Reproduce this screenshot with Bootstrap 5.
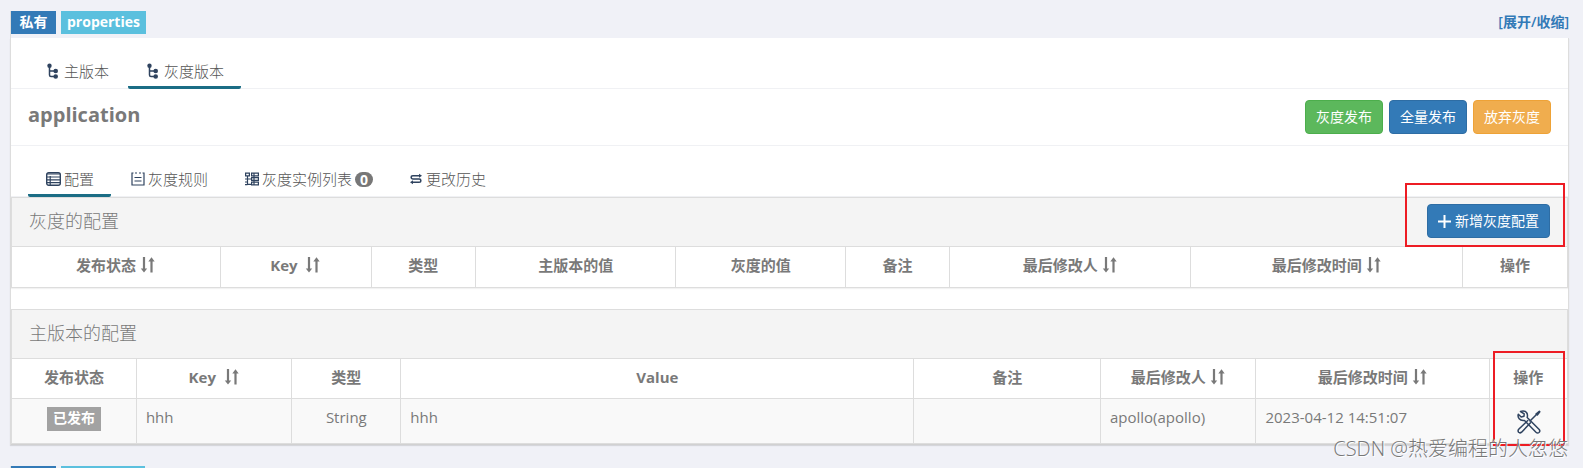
<!DOCTYPE html>
<html lang="zh-CN">
<head>
<meta charset="utf-8">
<meta name="viewport" content="width=device-width, initial-scale=1">
<title>application</title>
<link rel="stylesheet" href="https://cdn.jsdelivr.net/npm/bootstrap@5.3.0/dist/css/bootstrap.min.css">
<style>
  body { background: #f0f1f7; color: #797979; font: 15px/20px "Open Sans", "Noto Sans CJK SC", sans-serif; }
  .page-view { padding: 11px 14px 0 10px; }
  .ns-head { border-left: 1px solid #ddd; height: 27px; }
  .tags { gap: 5px; }
  .tag { display: inline-block; height: 23px; padding: 0 6px; color: #fff; font-size: 14px; line-height: 22px; font-weight: 700; white-space: nowrap; text-align: center; }
  .tag-blue { background: #337ab7; min-width: 45px; }
  .tag-cyan { background: #5bc0de; min-width: 84px; }
  .tag-gray { background: #a2a2a2; height: 24px; }
  .toggle-link { color: #337ab7; font-size: 14px; line-height: 22px; font-weight: 600; text-decoration: none; }
  .ns-panel { background: #fff; border: 1px solid #ddd; border-top: 0; box-shadow: 0 1px 1px rgba(0,0,0,.1); margin-bottom: 21px; }
  .tab-bar { height: 51px; border-bottom: 1px solid #f0f1f4; padding: 0 17px; gap: 2px; }
  .tab-bar .nav-link { height: 51px; border-bottom: 3px solid transparent; border-radius: 2px; padding: 0 17px; color: #555; font-weight: 300; display: flex; align-items: center; }
  .tab-bar .nav-link.active { border-bottom-color: #1b6d85; }
  .tab-bar .nav-link svg { flex: none; }
  .tab-main .nav-link { padding: 18px 17px 0 19px; }
  .tab-main .nav-link svg { margin-right: 5px; }
  .tab-sub .nav-link { padding: 18px 17px 0 18px; }
  .tab-sub .nav-link svg { margin-right: 3px; }
  .title-row { height: 57px; padding: 0 17px; border-bottom: 1px solid #f0f1f4; }
  .title-row h1 { font-size: 20px; line-height: 28px; font-weight: 700; margin: 0 0 5px; }
  .acts { gap: 6px; }
  .act { height: 34px; padding: 0 10px; font-size: 14px; line-height: 20px; border-radius: 4px; color: #fff; white-space: nowrap; }
  .act:hover { color: #fff; filter: brightness(.93); }
  .act-green { background: #5cb85c; border-color: #4cae4c; }
  .act-blue { background: #337ab7; border-color: #2e6da4; }
  .act-orange { background: #f0ad4e; border-color: #eea236; }
  .count { background: #777; color: #fff; font-size: 14px; line-height: 15px; font-weight: 700; border-radius: 10px; padding: 0 5px; margin-left: 3px; }
  .cfg { border: 1px solid #ddd; box-shadow: 0 1px 1px rgba(0,0,0,.05); }
  .cfg + .cfg { margin-top: 21px; }
  .cfg-head { background: #f4f4f4; height: 48px; padding: 0 17px 2px; }
  .cfg-head h2 { font-size: 18px; line-height: 24px; font-weight: 300; margin: 0; }
  .grid-table { width: 100%; table-layout: fixed; margin: 0; border-collapse: collapse; }
  .grid-table th, .grid-table td { border: 1px solid #ddd; border-bottom: 0; padding: 0 9px; white-space: nowrap; }
  .grid-table th:first-child, .grid-table td:first-child { border-left: 0; }
  .grid-table th:last-child, .grid-table td:last-child { border-right: 0; }
  .grid-table th { height: 40px; padding-bottom: 3px; text-align: center; font-weight: 700; }
  .grid-table td { height: 45px; padding-bottom: 7px; background: #f9f9f9; }
  .grid-table td.cell-tag { padding-bottom: 4px; }
  .grid-table td.cell-op { padding: 2px 0 0 1px; }
  .grid-table svg { vertical-align: -2px; }
  .w5 { width: 5%; } .w67 { width: 6.7%; } .w7 { width: 7%; } .w8 { width: 8%; } .w97 { width: 9.7%; }
  .w10 { width: 10%; } .w109 { width: 10.9%; } .w12 { width: 12%; } .w129 { width: 12.9%; } .w134 { width: 13.4%; }
  .w15 { width: 15%; } .w155 { width: 15.5%; } .w175 { width: 17.5%; } .w33 { width: 33%; }
  .tool-btn { border: 0; background: none; padding: 0; line-height: 0; }
  .hl { position: absolute; border: 2px solid #ed1c24; pointer-events: none; }
  .hl-add { top: -15px; right: 2px; width: 160px; height: 64px; }
  .hl-op { top: 41px; bottom: -3px; right: 2px; width: 72px; }
  .wm { position: absolute; right: -1px; bottom: -20px; font-size: 20px; line-height: 28px; font-weight: 300; color: #777; white-space: nowrap; text-shadow: 1px 1px 0 #fff; pointer-events: none; }
</style>
</head>
<body>
<svg width="0" height="0" class="position-absolute" aria-hidden="true">
  <symbol id="i-branch" viewBox="0 0 12 16"><g fill="#2f435f"><circle cx="2.500" cy="2.800" r="2.200"/><circle cx="8.700" cy="8" r="2.300"/><circle cx="8.700" cy="13.500" r="2.300"/></g><path d="M2.500 3v9q0 1.500 1.500 1.500H8M2.500 8H8" fill="none" stroke="#2f435f" stroke-width="1.500"/></symbol>
  <symbol id="i-table" viewBox="0 0 15 14"><rect x=".7" y=".7" width="13.600" height="12.600" rx="2" fill="none" stroke="#2f435f" stroke-width="1.400"/><path d="M1 2h13M1 5h13M1 7.800h13M1 10.600h13M4.200 4v9" stroke="#2f435f" stroke-width="1.200"/></symbol>
  <symbol id="i-rule" viewBox="0 0 14 14"><path d="M2.500 1H1v12h12V1h-1.500M4 1h2M8 1h2M3.500 5.500h7M3.500 9h7" fill="none" stroke="#2f435f" stroke-width="1.200"/></symbol>
  <symbol id="i-inst" viewBox="0 0 14 14"><path d="M.6 1.200h3.800v2.600H.6zM2.500 4v8.300h4M0 7h6.500M0 10h2.500M0 12.700h2.500M6.600 1.200h6.800v2.600H6.600zM6.600 5.700h6.800v2.600H6.600zM6.600 10.200h6.800v2.600H6.600zM9 1v12" fill="none" stroke="#2f435f" stroke-width="1.200"/></symbol>
  <symbol id="i-hist" viewBox="0 0 12 12"><path d="M10 2.700H2.800a1.600 1.600 0 0 0 0 3.300h6.400a1.600 1.600 0 0 1 0 3.300H2" fill="none" stroke="#2f435f" stroke-width="1.600"/><path d="M9 .7L12 2.700 9 4.700zM3 7.300L0 9.300l3 2z" fill="#2f435f"/></symbol>
  <symbol id="i-sort" viewBox="0 0 16 16"><path d="M4 0v13M11.500 3v12.500" stroke="#797979" stroke-width="2.200"/><path d="M.8 11.500h6.400L4 15.500zM8.300 4.500h6.400L11.500 .3z" fill="#797979"/></symbol>
  <symbol id="i-tools" viewBox="0 0 24 24"><g fill="none" stroke="#2f435f" stroke-width="1.500" stroke-linejoin="round" stroke-linecap="round"><path d="M3.500 1.500Q7 0 9.500 2.500Q11 4.500 10.200 7.500L22.200 19.500Q23.500 21.300 22 22.500Q20.500 23.500 19 22.200L7.500 10.400Q4 11 2.200 8.800Q.5 6.800 1.300 4.200L4.200 7 7 6.300 7.200 3.800z"/><path d="M13.500 12.800L4.600 22.200Q3 23.500 1.600 22.300Q.5 20.800 1.700 19.300L10.800 10.500M13 11L19.500 4.500M19 4L22.300 1.300 22.800 1.800 20.300 5z"/></g></symbol>
</svg>

<main class="page-view vh-100 overflow-hidden">
  <header class="ns-head d-flex justify-content-between">
    <div class="tags d-flex"><span class="tag tag-blue">私有</span><span class="tag tag-cyan">properties</span></div>
    <a href="#" class="toggle-link">[展开/收缩]</a>
  </header>
  <section class="ns-panel">
    <nav class="nav tab-bar tab-main flex-nowrap">
      <a class="nav-link" href="#"><svg width="12" height="16"><use href="#i-branch"/></svg>主版本</a>
      <a class="nav-link active" href="#"><svg width="12" height="16"><use href="#i-branch"/></svg>灰度版本</a>
    </nav>
    <div class="title-row d-flex align-items-center justify-content-between">
      <h1>application</h1>
      <div class="acts d-flex">
        <button type="button" class="btn act act-green">灰度发布</button>
        <button type="button" class="btn act act-blue">全量发布</button>
        <button type="button" class="btn act act-orange">放弃灰度</button>
      </div>
    </div>
    <nav class="nav tab-bar tab-sub flex-nowrap">
      <a class="nav-link active" href="#"><svg width="15" height="14"><use href="#i-table"/></svg>配置</a>
      <a class="nav-link" href="#"><svg width="14" height="14"><use href="#i-rule"/></svg>灰度规则</a>
      <a class="nav-link" href="#"><svg width="14" height="14"><use href="#i-inst"/></svg>灰度实例列表<span class="count">0</span></a>
      <a class="nav-link" href="#"><svg class="me-1" width="12" height="12"><use href="#i-hist"/></svg>更改历史</a>
    </nav>

    <div class="cfg position-relative">
      <div class="cfg-head d-flex align-items-center justify-content-between">
        <h2>灰度的配置</h2>
        <button type="button" class="btn act act-blue d-flex align-items-center"><svg class="me-1" width="13" height="13" viewBox="0 0 13 13" aria-hidden="true"><path d="M6.500 0v13M0 6.500h13" stroke="#fff" stroke-width="2"/></svg>新增灰度配置</button>
      </div>
      <table class="grid-table">
        <colgroup><col class="w134"><col class="w97"><col class="w67"><col class="w129"><col class="w109"><col class="w67"><col class="w155"><col class="w175"><col class="w67"></colgroup>
        <thead><tr>
          <th>发布状态 <svg width="16" height="16"><use href="#i-sort"/></svg></th>
          <th>Key&nbsp; <svg width="16" height="16"><use href="#i-sort"/></svg></th>
          <th>类型</th><th>主版本的值</th><th>灰度的值</th><th>备注</th>
          <th>最后修改人 <svg width="16" height="16"><use href="#i-sort"/></svg></th>
          <th>最后修改时间 <svg width="16" height="16"><use href="#i-sort"/></svg></th>
          <th>操作</th>
        </tr></thead>
      </table>
      <div class="hl hl-add"></div>
    </div>

    <div class="cfg position-relative">
      <div class="cfg-head d-flex align-items-center"><h2>主版本的配置</h2></div>
      <table class="grid-table">
        <colgroup><col class="w8"><col class="w10"><col class="w7"><col class="w33"><col class="w12"><col class="w10"><col class="w15"><col class="w5"></colgroup>
        <thead><tr>
          <th>发布状态</th>
          <th>Key&nbsp; <svg width="16" height="16"><use href="#i-sort"/></svg></th>
          <th>类型</th><th>Value</th><th>备注</th>
          <th>最后修改人 <svg width="16" height="16"><use href="#i-sort"/></svg></th>
          <th>最后修改时间 <svg width="16" height="16"><use href="#i-sort"/></svg></th>
          <th>操作</th>
        </tr></thead>
        <tbody><tr>
          <td class="cell-tag text-center"><span class="tag tag-gray align-middle">已发布</span></td>
          <td>hhh</td>
          <td class="text-center">String</td>
          <td>hhh</td>
          <td></td>
          <td>apollo(apollo)</td>
          <td>2023-04-12 14:51:07</td>
          <td class="cell-op text-center"><button type="button" class="tool-btn align-middle" aria-label="操作"><svg width="24" height="24"><use href="#i-tools"/></svg></button></td>
        </tr></tbody>
      </table>
      <div class="hl hl-op"></div>
      <div class="wm">CSDN @热爱编程的人忽悠</div>
    </div>
  </section>
  <header class="ns-head d-flex">
    <div class="tags d-flex"><span class="tag tag-blue"></span><span class="tag tag-cyan"></span></div>
  </header>
</main>
<script src="https://cdn.jsdelivr.net/npm/bootstrap@5.3.0/dist/js/bootstrap.bundle.min.js"></script>
</body>
</html>
